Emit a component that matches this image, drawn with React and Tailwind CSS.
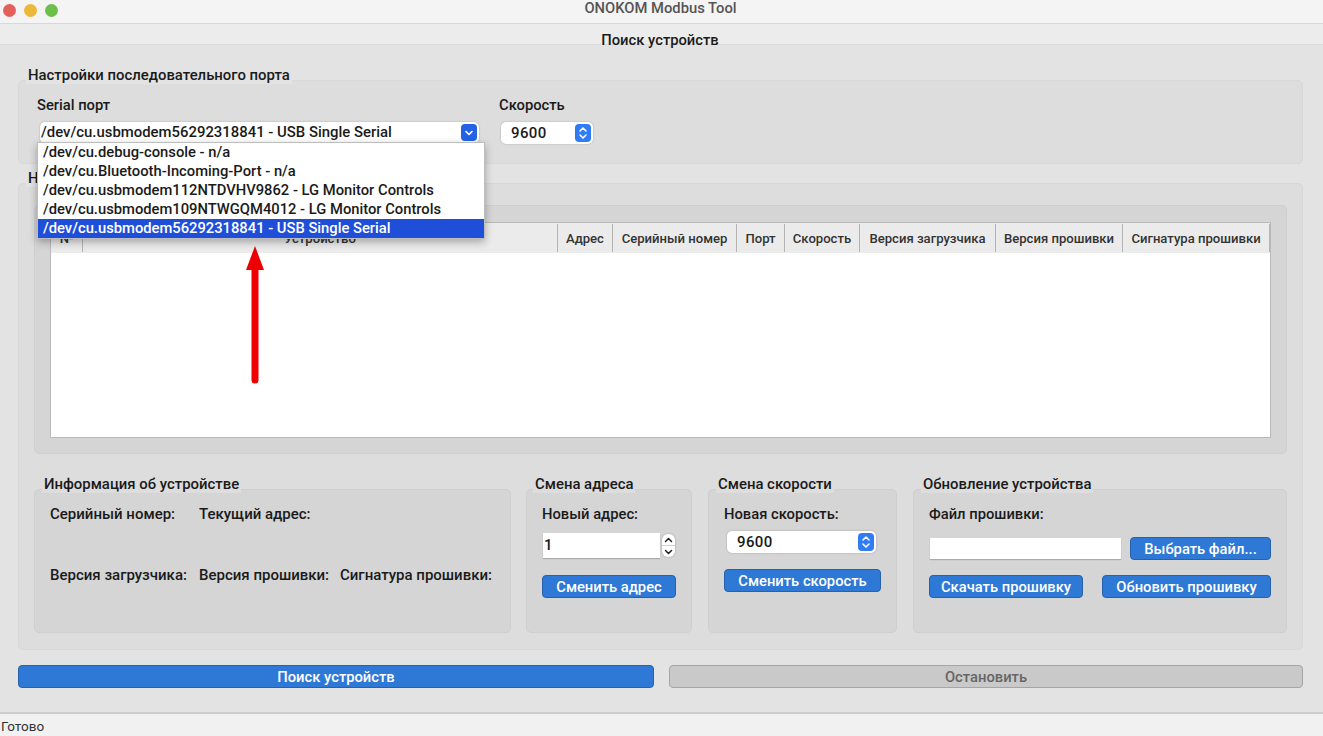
import React from "react";

const ports = [
  "/dev/cu.debug-console - n/a",
  "/dev/cu.Bluetooth-Incoming-Port - n/a",
  "/dev/cu.usbmodem112NTDVHV9862 - LG Monitor Controls",
  "/dev/cu.usbmodem109NTWGQM4012 - LG Monitor Controls",
  "/dev/cu.usbmodem56292318841 - USB Single Serial",
];

const columns = [
  { title: "N-", width: "w-[32px]" },
  { title: "Устройство", width: "w-[475px]" },
  { title: "Адрес", width: "w-[55px]" },
  { title: "Серийный номер", width: "w-[124px]" },
  { title: "Порт", width: "w-[48px]" },
  { title: "Скорость", width: "w-[75px]" },
  { title: "Версия загрузчика", width: "w-[136px]" },
  { title: "Версия прошивки", width: "w-[127px]" },
  { title: "Сигнатура прошивки", width: "flex-1" },
];

const GroupTitle = ({ children, className }) => (
  <div className={`absolute -top-[15px] px-[2px] h-[18px] leading-[18px] text-[14.9px] font-medium text-[#1a1a1a] whitespace-nowrap ${className}`}>
    {children}
  </div>
);

const StepperIcon = ({ single }) => (
  <svg width="10" height="16" viewBox="0 0 10 16" fill="none" stroke="white" strokeWidth="1.6" strokeLinecap="round" strokeLinejoin="round">
    {single ? (
      <path d="M2 6.5 5 9.5 8 6.5" />
    ) : (
      <>
        <path d="M2 6 5 3 8 6" />
        <path d="M2 10 5 13 8 10" />
      </>
    )}
  </svg>
);

const SpeedSelect = ({ className }) => (
  <div className={`flex items-center justify-between h-[22px] bg-white rounded-[5px] shadow-[0_0_2px_rgba(0,0,0,0.25)] pl-[10px] pr-[2px] ${className}`}>
    <span className="text-[15px] font-medium text-[#1a1a1a] tracking-[0.4px]">9600</span>
    <span className="flex items-center justify-center w-[16px] h-[18px] rounded-[4px] bg-[#2f7cf6]">
      <StepperIcon />
    </span>
  </div>
);

const BlueButton = ({ children, className }) => (
  <button className={`h-[23px] rounded-[4px] bg-[#2e78d6] border border-[#2462ad] text-white text-[14.75px] font-medium whitespace-nowrap ${className}`}>
    {children}
  </button>
);

export default function App() {
  return (
    <div className="relative flex flex-col w-[1323px] h-[736px] overflow-hidden bg-[#e3e3e3] font-['Roboto',sans-serif]">
      {/* Title bar */}
      <div className="relative flex items-center justify-center h-[24px] bg-[#f5f4f4] border-b border-[#d8d8d8]">
        <div className="absolute left-[3px] top-[4px] flex gap-[8px]">
          <span className="w-[13px] h-[13px] rounded-full bg-[#e5605b]"></span>
          <span className="w-[13px] h-[13px] rounded-full bg-[#ecb83c]"></span>
          <span className="w-[13px] h-[13px] rounded-full bg-[#6cc04a]"></span>
        </div>
        <span className="text-[14.75px] font-medium text-[#555555] -mt-[7px] -ml-[2px]">ONOKOM Modbus Tool</span>
      </div>

      {/* Tab */}
      <div className="flex items-center justify-center h-[20px] bg-[#ececec]">
        <span className="text-[14.75px] font-medium text-[#1a1a1a] relative top-[6px] ml-[-3px]">Поиск устройств</span>
      </div>

      {/* Content */}
      <div className="flex-1 flex flex-col pl-[18px] pr-[20px] pt-[36px] bg-[#e3e3e3] shadow-[inset_0_1px_0_#dcdcdc]">
        {/* Serial settings */}
        <div className="relative h-[84px] rounded-[5px] bg-[#dddddd] border border-[#d8d8d8]">
          <GroupTitle className="left-[7px] bg-[#e3e3e3]">Настройки последовательного порта</GroupTitle>
          <div className="flex pl-[18px] pt-[15px]">
            <div className="w-[462px]">
              <div className="text-[14.75px] font-medium text-[#1a1a1a] leading-[18px]">Serial порт</div>
              <div className="flex items-center justify-between w-[439px] h-[21px] mt-[8px] ml-[3px] bg-white rounded-[5px] shadow-[0_0_2px_rgba(0,0,0,0.25)] pr-[2px]">
                <span className="pl-[1px] text-[14.9px] font-medium text-[#1a1a1a] whitespace-nowrap">{ports[4]}</span>
                <span className="flex items-center justify-center w-[16px] h-[17px] rounded-[4px] bg-[#2463e8]">
                  <StepperIcon single />
                </span>
              </div>
            </div>
            <div>
              <div className="text-[14.75px] font-medium text-[#1a1a1a] leading-[18px]">Скорость</div>
              <SpeedSelect className="w-[92px] mt-[8px] ml-[2px]" />
            </div>
          </div>
        </div>

        {/* Devices */}
        <div className="relative h-[467px] mt-[19px] rounded-[5px] bg-[#dddddd] border border-[#d8d8d8] px-[15px] pt-[21px]">
          <GroupTitle className="left-[7px] bg-[#e3e3e3]">Найденные устройства</GroupTitle>
          <div className="h-[249px] rounded-[5px] bg-[#d5d5d5] border border-[#cfcfcf] px-[15px] pt-[16px]">
            <div className="h-[216px] bg-white border border-[#b9b9b9]">
              <div className="flex h-[30px] bg-[#ebebeb]">
                {columns.map((col) => (
                  <div
                    key={col.title}
                    className={`flex items-center justify-center border-r border-[#b5b5b5] my-[1px] pt-[1px] text-[13.1px] font-medium text-[#333333] whitespace-nowrap ${col.width}`}
                  >
                    {col.title}
                  </div>
                ))}
              </div>
            </div>
          </div>

          {/* Bottom groups */}
          <div className="flex gap-[15px] mt-[35px] h-[144px]">
            <div className="relative w-[477px] rounded-[5px] bg-[#d5d5d5] border border-[#cfcfcf] pl-[15px] pt-[15px]">
              <GroupTitle className="left-[7px] bg-[#dddddd]">Информация об устройстве</GroupTitle>
              <div className="grid grid-cols-[149px_141px_1fr] auto-rows-[61px] text-[15px] font-medium text-[#1a1a1a] leading-[18px] whitespace-nowrap">
                <div>Серийный номер:</div>
                <div>Текущий адрес:</div>
                <div></div>
                <div>Версия загрузчика:</div>
                <div>Версия прошивки:</div>
                <div>Сигнатура прошивки:</div>
              </div>
            </div>

            <div className="relative w-[166px] rounded-[5px] bg-[#d5d5d5] border border-[#cfcfcf] pl-[15px] pt-[15px]">
              <GroupTitle className="left-[6px] bg-[#dddddd]">Смена адреса</GroupTitle>
              <div className="text-[14.75px] font-medium text-[#1a1a1a] leading-[18px]">Новый адрес:</div>
              <div className="flex items-center mt-[10px] ml-[1px]">
                <div className="flex items-center w-[117px] h-[25px] bg-white shadow-[0_1px_1px_rgba(0,0,0,0.2)] text-[15px] font-medium text-[#1a1a1a] pl-[1px]">1</div>
                <div className="flex flex-col items-center w-[13px] h-[23px] ml-[2px] bg-white rounded-[6px] shadow-[0_0_2px_rgba(0,0,0,0.3)] divide-y divide-[#d0d0d0]">
                  <div className="flex-1 w-full flex items-center justify-center">
                    <svg width="9" height="6" viewBox="0 0 9 6" fill="none" stroke="#222222" strokeWidth="1.5" strokeLinecap="round" strokeLinejoin="round">
                      <path d="M1.500 4.500 4.500 1.500 7.500 4.500" />
                    </svg>
                  </div>
                  <div className="flex-1 w-full flex items-center justify-center">
                    <svg width="9" height="6" viewBox="0 0 9 6" fill="none" stroke="#222222" strokeWidth="1.5" strokeLinecap="round" strokeLinejoin="round">
                      <path d="M1.500 1.500 4.500 4.500 7.500 1.500" />
                    </svg>
                  </div>
                </div>
              </div>
              <BlueButton className="w-[134px] mt-[17px]">Сменить адрес</BlueButton>
            </div>

            <div className="relative w-[189px] ml-[1px] rounded-[5px] bg-[#d5d5d5] border border-[#cfcfcf] pl-[15px] pt-[15px]">
              <GroupTitle className="left-[7px] bg-[#dddddd]">Смена скорости</GroupTitle>
              <div className="text-[14.75px] font-medium text-[#1a1a1a] leading-[18px]">Новая скорость:</div>
              <SpeedSelect className="w-[149px] mt-[8px] ml-[3px]" />
              <BlueButton className="w-[157px] mt-[16px]">Сменить скорость</BlueButton>
            </div>

            <div className="relative w-[374px] ml-[1px] rounded-[5px] bg-[#d5d5d5] border border-[#cfcfcf] pl-[15px] pt-[15px]">
              <GroupTitle className="left-[7px] bg-[#dddddd]">Обновление устройства</GroupTitle>
              <div className="text-[14.75px] font-medium text-[#1a1a1a] leading-[18px]">Файл прошивки:</div>
              <div className="flex items-center gap-[9px] mt-[14px]">
                <div className="w-[191px] h-[21px] ml-[1px] bg-white shadow-[0_1px_1px_rgba(0,0,0,0.2)]"></div>
                <BlueButton className="w-[141px]">Выбрать файл...</BlueButton>
              </div>
              <div className="flex gap-[19px] mt-[15px]">
                <BlueButton className="w-[154px]">Скачать прошивку</BlueButton>
                <BlueButton className="w-[169px]">Обновить прошивку</BlueButton>
              </div>
            </div>
          </div>
        </div>

        {/* Actions */}
        <div className="flex gap-[15px] mt-[15px]">
          <BlueButton className="w-[636px]">Поиск устройств</BlueButton>
          <button className="flex-1 h-[23px] rounded-[4px] bg-[#c9c9c9] border border-[#a5a5a5] text-[#666666] text-[14.75px] font-medium">
            Остановить
          </button>
        </div>
      </div>

      {/* Status bar */}
      <div className="flex items-center h-[24px] bg-[#f1f1f1] border-t-2 border-[#cdcdcd] pl-[1px] pt-[2px] text-[13.5px] text-[#333333]">
        Готово
      </div>

      {/* Open combo list */}
      <div className="absolute left-[37px] top-[142px] w-[448px] bg-white border border-[#bdbdbd] shadow-[0_3px_8px_rgba(0,0,0,0.3)]">
        {ports.map((port, i) => (
          <div
            key={port}
            className={`h-[19px] leading-[19px] pl-[5px] text-[14.75px] font-medium whitespace-nowrap ${i === 4 ? "bg-[#1f4fd8] text-white" : "text-[#1a1a1a]"}`}
          >
            {port}
          </div>
        ))}
      </div>

      {/* Annotation arrow */}
      <svg className="absolute left-[243px] top-[244px]" width="24" height="142" viewBox="0 0 24 142" fill="none">
        <path d="M12 24V136" stroke="#ee0000" strokeWidth="7" strokeLinecap="round" />
        <path d="M12 2 21 26H3Z" fill="#ee0000" />
      </svg>
    </div>
  );
}
